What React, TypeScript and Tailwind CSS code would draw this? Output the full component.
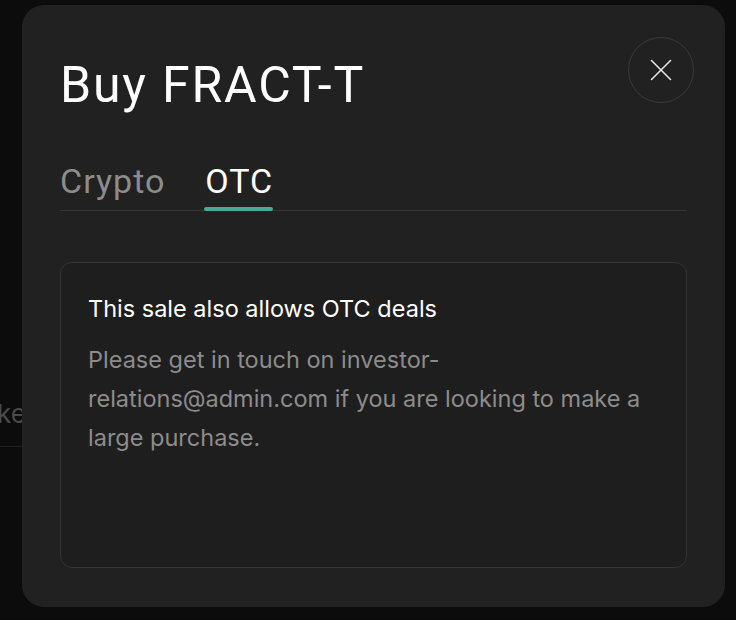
import React, { useState } from 'react';
import { X } from 'lucide-react';

const App = () => {
  const [tab, setTab] = useState<'crypto' | 'otc'>('otc');

  return (
    <div className="relative w-[736px] h-[620px] overflow-hidden bg-[#0c0c0c]" style={{ fontFamily: 'Inter, "Noto Sans", sans-serif' }}>
      {/* page content behind the dialog */}
      <div className="pt-[398px]">
        <div className="w-[300px] -ml-[41px] text-[26px] text-[#4a4a4a] leading-[32px]">Make</div>
        <div className="mt-[16px] h-px w-[300px] bg-[#1e1e1e]" />
      </div>

      {/* dialog */}
      <div className="absolute left-[22px] top-[5px] w-[703px] h-[602px] rounded-[22px] bg-[#212121] px-[38px] pt-[32px]">
        <div className="flex items-start justify-between">
          <h1 className="mt-[20px] text-[50px] leading-[56px] text-white tracking-[1.8px]" style={{ fontFamily: 'Roboto, sans-serif' }}>
            Buy FRACT-T
          </h1>
          <button className="mr-[-7px] flex h-[66px] w-[66px] items-center justify-center rounded-full border border-[#3a3a3a] text-[#e6e6e6]">
            <X size={38} strokeWidth={1} />
          </button>
        </div>

        <div className="mt-[48px] flex gap-[40px] border-b border-[#353535]" style={{ fontFamily: 'Roboto, sans-serif' }}>
          <button
            onClick={() => setTab('crypto')}
            className={`relative pb-[9px] text-[34px] leading-[40px] tracking-[1px] ${tab === 'crypto' ? 'text-white' : 'text-[#8c8c8c]'}`}
          >
            Crypto
            {tab === 'crypto' && <span className="absolute -bottom-[1px] left-0 right-0 h-[4px] rounded-full bg-[#4aa898]" />}
          </button>
          <button
            onClick={() => setTab('otc')}
            className={`relative pb-[9px] text-[34px] leading-[40px] tracking-[1px] ${tab === 'otc' ? 'text-white' : 'text-[#8c8c8c]'}`}
          >
            OTC
            {tab === 'otc' && <span className="absolute -bottom-[1px] -left-[1px] right-0 h-[4px] rounded-full bg-[#4aa898]" />}
          </button>
        </div>

        <div className="mt-[51px] h-[306px] rounded-[12px] border border-[#353535] bg-[#1e1e1e] px-[27px] pt-[29px]">
          <p className="text-[23.5px] leading-[34px] text-white">This sale also allows OTC deals</p>
          <p className="mt-[14px] text-[23.5px] leading-[39px] text-[#8c8c8c]">
            Please get in touch on investor-relations@admin.com if you are looking to make a large purchase.
          </p>
        </div>
      </div>
    </div>
  );
};

export default App;
